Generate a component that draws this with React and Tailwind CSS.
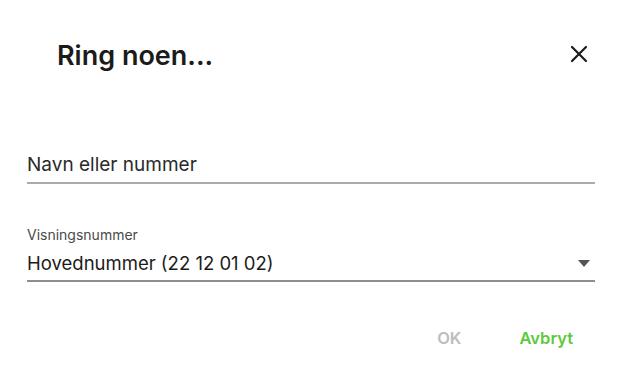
import React from "react";

export default function App() {
  return (
    <div
      className="w-[622px] h-[366px] bg-white relative"
      style={{ fontFamily: "Inter, 'Noto Sans', sans-serif" }}
    >
      {/* Header */}
      <div className="flex items-center justify-between pl-[57px] pr-[34px] pt-[39px]">
        <h1 className="text-[27px] leading-[34px] font-semibold text-[#1b1b1b]">
          Ring noen...
        </h1>
        <button className="w-[18px] h-[18px] text-[#1b1b1b] -mt-[4px]">
          <svg viewBox="0 0 18 18" width="18" height="18" fill="none" stroke="currentColor" strokeWidth="2.2" strokeLinecap="round">
            <path d="M2 2L16 16M16 2L2 16" />
          </svg>
        </button>
      </div>

      {/* Name field */}
      <div className="mx-[27px] mt-[80px]">
        <div className="text-[19px] leading-[24px] text-[#2a2a2a] pb-[5px]">Navn eller nummer</div>
        <div className="h-[2px] bg-[#ababab]"></div>
      </div>

      {/* Display number select */}
      <div className="mx-[27px] mt-[43px]">
        <div className="text-[14px] leading-[16px] text-[#4a4a4a]">Visningsnummer</div>
        <div className="flex items-center justify-between mt-[8px] pb-[5px]">
          <span className="text-[18.5px] leading-[24px] text-[#1b1b1b]">Hovednummer (22 12 01 02)</span>
          <svg width="12" height="7" viewBox="0 0 12 7" className="mr-[5px]">
            <path d="M0 0H12L6 7Z" fill="#555" />
          </svg>
        </div>
        <div className="h-[2px] bg-[#8e8e8e]"></div>
      </div>

      {/* Actions */}
      <div className="flex justify-end items-center gap-[58px] pr-[49px] mt-[44px]">
        <button className="text-[16.5px] font-semibold text-[#bdbdbd]">OK</button>
        <button className="text-[16.5px] font-semibold text-[#5ec83f]">Avbryt</button>
      </div>
    </div>
  );
}
